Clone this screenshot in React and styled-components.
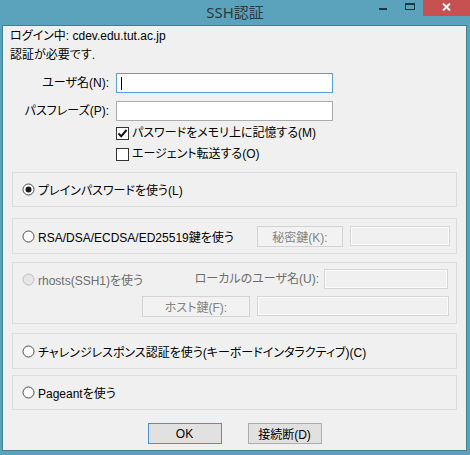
import React from 'react';
import styled, { createGlobalStyle } from 'styled-components';

const GlobalStyle = createGlobalStyle`
  html, body {
    margin: 0;
    padding: 0;
    background: #5ba3bd;
  }
  body {
    font-family: "Liberation Sans", "Noto Sans CJK JP", sans-serif;
    font-size: 12px;
    color: #000;
    font-feature-settings: "palt";
  }
`;

const Window = styled.div`
  width: 470px;
  height: 455px;
  background: #5ba3bd;
  display: flex;
  flex-direction: column;
  box-sizing: border-box;
`;

const TitleBar = styled.div`
  height: 25px;
  display: grid;
  grid-template-columns: 1fr auto 1fr;
  align-items: start;
`;

const Title = styled.div`
  grid-column: 2;
  line-height: 25px;
  font-family: "Noto Sans", "Noto Sans CJK JP", sans-serif;
  font-size: 15px;
  color: #2b3a40;
`;

const Controls = styled.div`
  grid-column: 3;
  justify-self: end;
  display: flex;
`;

const ControlBtn = styled.div`
  width: ${(p) => p.$w}px;
  height: 16px;
  display: flex;
  justify-content: center;
  padding-top: ${(p) => p.$pt}px;
  box-sizing: border-box;
  background: ${(p) => (p.$close ? '#c75050' : 'transparent')};
`;

const ClientFrame = styled.div`
  flex: 1;
  margin: 0 3px 4px 2px;
  border: 1px solid #417f95;
  background: #f0f0f0;
  display: flex;
  flex-direction: column;
`;

const Info = styled.div`
  padding: 1px 0 0 7px;
  line-height: 19px;
`;

const Form = styled.div`
  margin-top: 8px;
  display: grid;
  grid-template-columns: 106px 217px;
  column-gap: 7px;
  row-gap: 8px;
`;

const Label = styled.div`
  text-align: right;
  line-height: 20px;
  white-space: nowrap;
  color: ${(p) => (p.$disabled ? '#6d6d6d' : '#000')};
`;

const TextBox = styled.div`
  position: relative;
  width: ${(p) => (p.$w ? `${p.$w}px` : 'auto')};
  height: 20px;
  box-sizing: border-box;
  border: 1px solid ${(p) => (p.$focus ? '#569de5' : p.$disabled ? '#d6d6d6' : '#ababab')};
  background: ${(p) => (p.$disabled ? '#f0f0f0' : '#fff')};
  box-shadow: ${(p) => (p.$disabled ? 'inset 0 0 0 1px #fbfbfb' : 'none')};
  margin-right: ${(p) => p.$mr || 0}px;
`;

const Caret = styled.span`
  position: absolute;
  left: 4px;
  top: 3px;
  width: 1px;
  height: 13px;
  background: #000;
`;

const Checks = styled.div`
  margin: 6px 0 0 113px;
  display: flex;
  flex-direction: column;
  gap: 8px;
`;

const CheckRow = styled.label`
  display: flex;
  align-items: center;
  gap: 3px;
  height: 13px;
  line-height: 13px;
  white-space: nowrap;
`;

const CheckBox = styled.span`
  width: 13px;
  height: 13px;
  box-sizing: border-box;
  border: 1px solid #333;
  background: #fff;
  display: flex;
  align-items: center;
  justify-content: center;
  flex: none;
`;

const Groups = styled.div`
  margin-left: 9px;
  width: 445px;
  display: flex;
  flex-direction: column;
`;

const Group = styled.div`
  margin-top: ${(p) => p.$mt}px;
  height: ${(p) => p.$h}px;
  box-sizing: border-box;
  border: 1px solid #dcdcdc;
  padding: ${(p) => (p.$stack ? '6px 7px 0 9px' : '0 6px 0 9px')};
  display: flex;
  flex-direction: ${(p) => (p.$stack ? 'column' : 'row')};
  align-items: ${(p) => (p.$stack ? 'stretch' : 'center')};
  gap: 7px;
`;

const GroupRow = styled.div`
  height: 20px;
  display: flex;
  align-items: center;
  justify-content: ${(p) => (p.$end ? 'flex-end' : 'flex-start')};
  gap: ${(p) => p.$gap || 0}px;
`;

const RadioRow = styled.div`
  display: flex;
  align-items: center;
  gap: 3px;
  white-space: nowrap;
  color: ${(p) => (p.$disabled ? '#6d6d6d' : '#000')};
  margin-right: auto;
`;

const RadioDot = styled.span`
  width: 13px;
  height: 13px;
  flex: none;
  display: flex;
`;

const Button = styled.div`
  width: ${(p) => p.$w}px;
  height: ${(p) => p.$h || 21}px;
  box-sizing: border-box;
  border: 1px solid ${(p) => (p.$default ? '#4a92d8' : p.$disabled ? '#d3d3d3' : '#adadad')};
  background: ${(p) => (p.$disabled ? '#f2f2f2' : '#e1e1e1')};
  color: ${(p) => (p.$disabled ? '#838383' : '#000')};
  display: flex;
  align-items: center;
  justify-content: center;
  white-space: nowrap;
  flex: none;
`;

const Footer = styled.div`
  margin-top: 13px;
  display: flex;
  justify-content: center;
  gap: 26px;
`;

const Radio = ({ checked, disabled, children }) => (
  <RadioRow $disabled={disabled}>
    <RadioDot>
      <svg width="13" height="13" viewBox="0 0 13 13">
        <circle
          cx="6.5"
          cy="6.5"
          r="5.5"
          fill={disabled ? '#e6e6e6' : '#fff'}
          stroke={disabled ? '#bcbcbc' : '#4a4a4a'}
          strokeWidth="1"
        />
        {checked && <circle cx="6.5" cy="6.5" r="3" fill="#1a1a1a" />}
      </svg>
    </RadioDot>
    {children}
  </RadioRow>
);

const Check = ({ checked, children }) => (
  <CheckRow>
    <CheckBox>
      {checked && (
        <svg width="11" height="11" viewBox="0 0 11 11">
          <path d="M1.5 5.5 L4.2 8.3 L9.5 2" fill="none" stroke="#111" strokeWidth="2" />
        </svg>
      )}
    </CheckBox>
    {children}
  </CheckRow>
);

export default function App() {
  return (
    <>
      <GlobalStyle />
      <Window>
        <TitleBar>
          <Title>SSH認証</Title>
          <Controls>
            <ControlBtn $w={26} $pt={8}>
              <svg width="8" height="2" viewBox="0 0 8 2">
                <rect width="8" height="2" fill="#1f3540" />
              </svg>
            </ControlBtn>
            <ControlBtn $w={27} $pt={3}>
              <svg width="10" height="7" viewBox="0 0 10 7">
                <rect x="0.5" y="0.5" width="9" height="6" fill="none" stroke="#1f3540" />
                <rect x="0" y="0" width="10" height="2" fill="#1f3540" />
              </svg>
            </ControlBtn>
            <ControlBtn $w={47} $pt={3} $close>
              <svg width="9" height="8" viewBox="0 0 9 8">
                <path d="M1 0.5 L8 7.5 M8 0.5 L1 7.5" stroke="#fff" strokeWidth="2" />
              </svg>
            </ControlBtn>
          </Controls>
        </TitleBar>

        <ClientFrame>
          <Info>
            <div>ログイン中: cdev.edu.tut.ac.jp</div>
            <div>認証が必要です.</div>
          </Info>

          <Form>
            <Label>ユーザ名(N):</Label>
            <TextBox $focus>
              <Caret />
            </TextBox>
            <Label>パスフレーズ(P):</Label>
            <TextBox />
          </Form>

          <Checks>
            <Check checked>パスワードをメモリ上に記憶する(M)</Check>
            <Check>エージェント転送する(O)</Check>
          </Checks>

          <Groups>
            <Group $mt={11} $h={35}>
              <Radio checked>プレインパスワードを使う(L)</Radio>
            </Group>

            <Group $mt={11} $h={36}>
              <Radio>RSA/DSA/ECDSA/ED25519鍵を使う</Radio>
              <Button $w={86} $disabled>秘密鍵(K):</Button>
              <TextBox $w={100} $disabled />
            </Group>

            <Group $mt={8} $h={62} $stack>
              <GroupRow $gap={5}>
                <Radio disabled>rhosts(SSH1)を使う</Radio>
                <Label $disabled>ローカルのユーザ名(U):</Label>
                <TextBox $w={124} $mr={1} $disabled />
              </GroupRow>
              <GroupRow $end $gap={7}>
                <Button $w={108} $disabled>ホスト鍵(F):</Button>
                <TextBox $w={192} $disabled />
              </GroupRow>
            </Group>

            <Group $mt={9} $h={36}>
              <Radio>チャレンジレスポンス認証を使う(キーボードインタラクティブ)(C)</Radio>
            </Group>

            <Group $mt={6} $h={35}>
              <Radio>Pageantを使う</Radio>
            </Group>
          </Groups>

          <Footer>
            <Button $w={74} $default>OK</Button>
            <Button $w={74}>接続断(D)</Button>
          </Footer>
        </ClientFrame>
      </Window>
    </>
  );
}
